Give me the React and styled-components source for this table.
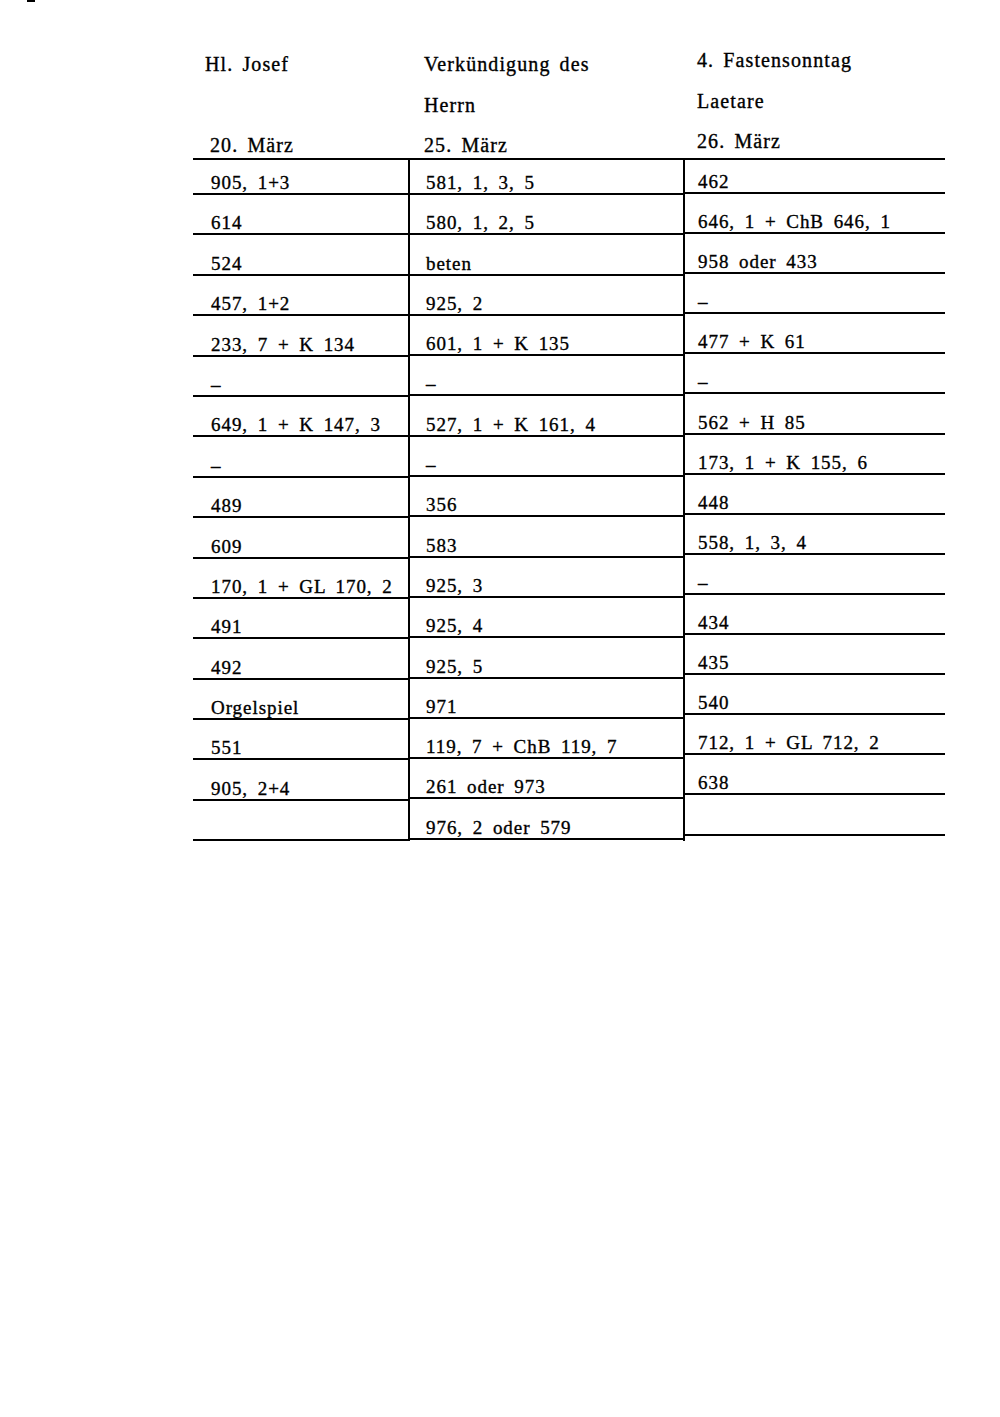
import React from "react";
import styled, { createGlobalStyle } from "styled-components";

const GlobalStyle = createGlobalStyle`
  html, body {
    margin: 0;
    padding: 0;
    background: #fff;
  }
  body {
    font-family: "Liberation Serif", "Times New Roman", serif;
    color: #000;
  }
`;

const columns = [
  {
    head: ["Hl. Josef", "", "20. März"],
    headIndent: [12, 17, 17],
    headShift: 3,
    pad: 18,
    first: 35,
    row: 40.4,
    cells: [
      "905, 1+3", "614", "524", "457, 1+2", "233, 7 + K 134", "–",
      "649, 1 + K 147, 3", "–", "489", "609", "170, 1 + GL 170, 2",
      "491", "492", "Orgelspiel", "551", "905, 2+4", "",
    ],
  },
  {
    head: ["Verkündigung des", "Herrn", "25. März"],
    headIndent: [15, 15, 15],
    headShift: 3,
    pad: 16,
    first: 35,
    row: 40.3,
    cells: [
      "581, 1, 3, 5", "580, 1, 2, 5", "beten", "925, 2", "601, 1 + K 135", "–",
      "527, 1 + K 161, 4", "–", "356", "583", "925, 3", "925, 4", "925, 5",
      "971", "119, 7 + ChB 119, 7", "261 oder 973", "976, 2 oder 579",
    ],
  },
  {
    head: ["4. Fastensonntag", "Laetare", "26. März"],
    headIndent: [13, 13, 13],
    headShift: 7,
    pad: 13,
    first: 34,
    row: 40.1,
    cells: [
      "462", "646, 1 + ChB 646, 1", "958 oder 433", "–", "477 + K 61", "–",
      "562 + H 85", "173, 1 + K 155, 6", "448", "558, 1, 3, 4", "–",
      "434", "435", "540", "712, 1 + GL 712, 2", "638", "",
    ],
  },
];

function App() {
  return (
    <Page>
      <GlobalStyle />
      <Mark />
      <Sheet>
        <HeadGrid>
          {columns.map((col, i) => (
            <HeadCol key={i}>
              {col.head.map((h, j) => (
                <HeadLine key={j} $indent={col.headIndent[j]} $shift={col.headShift}>
                  {h}
                </HeadLine>
              ))}
            </HeadCol>
          ))}
        </HeadGrid>
        <BodyGrid>
          {columns.map((col, i) => (
            <Column key={i} $divider={i > 0}>
              {col.cells.map((c, j) => (
                <Cell key={j} $pad={col.pad} $h={j === 0 ? col.first : col.row}>
                  {c}
                </Cell>
              ))}
            </Column>
          ))}
        </BodyGrid>
      </Sheet>
    </Page>
  );
}

export default App;

const Page = styled.div`
  width: 1000px;
  min-height: 1417px;
  background: #fff;
`;

const Mark = styled.div`
  width: 8px;
  height: 2px;
  margin-left: 27px;
  background: #000;
`;

const Sheet = styled.div`
  width: 752px;
  margin-left: 193px;
  padding-top: 34.5px;
  font-size: 19px;
  letter-spacing: 0.95px;
  word-spacing: 4px;
  line-height: 1;
  -webkit-text-stroke: 0.35px #000;
`;

const HeadGrid = styled.div`
  display: grid;
  grid-template-columns: 216px 275px 261px;
  font-size: 20px;
  letter-spacing: 1.1px;
  word-spacing: 3px;
`;

const HeadCol = styled.div`
  display: flex;
  flex-direction: column;
`;

const HeadLine = styled.div`
  height: 40.5px;
  display: flex;
  align-items: flex-end;
  box-sizing: border-box;
  padding-left: ${(p) => p.$indent}px;
  padding-bottom: ${(p) => p.$shift}px;
  white-space: nowrap;
`;

const BodyGrid = styled.div`
  display: grid;
  grid-template-columns: 216px 275px 261px;
  border-top: 2px solid #000;
`;

const Column = styled.div`
  display: flex;
  flex-direction: column;
  border-left: ${(p) => (p.$divider ? "2px solid #000" : "none")};
  margin-left: ${(p) => (p.$divider ? "-1px" : "0")};
`;

const Cell = styled.div`
  height: ${(p) => p.$h}px;
  box-sizing: border-box;
  display: flex;
  align-items: flex-end;
  padding-left: ${(p) => p.$pad}px;
  padding-bottom: 1px;
  border-bottom: 2px solid #000;
  white-space: nowrap;
`;
